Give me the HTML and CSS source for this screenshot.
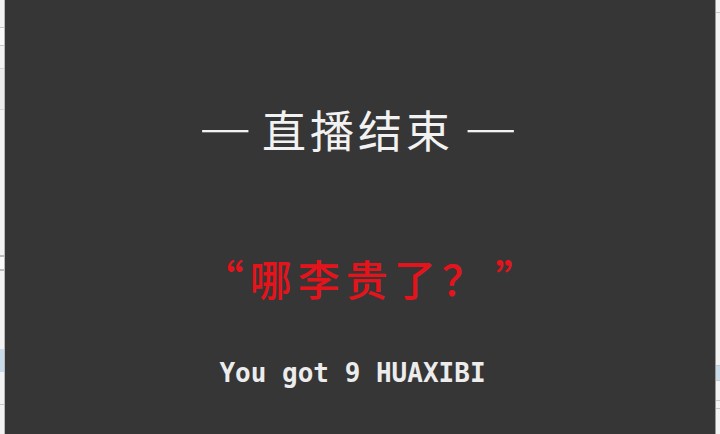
FILE: index.html
```html
<!DOCTYPE html>
<html lang="zh-CN">
<head>
<meta charset="utf-8">
<title>直播结束</title>
<link rel="stylesheet" href="styles.css">
</head>
<body>
<div class="frame">
  <div class="strip strip-left">
    <div class="sp" style="height:27px"></div>
    <div class="ln"></div>
    <div class="band-light" style="height:17px"></div>
    <div class="ln"></div>
    <div class="sp" style="height:22px"></div>
    <div class="box" style="height:40px"></div>
    <div class="sp" style="height:145px"></div>
    <div class="ln thick"></div>
    <div class="band-light" style="height:12px"></div>
    <div class="ln thick"></div>
    <div class="sp" style="height:78px"></div>
    <div class="ln teal"></div>
    <div class="band-blue" style="height:22px"></div>
    <div class="sp" style="height:32px"></div>
    <div class="ln"></div>
  </div>
  <main class="panel">
    <h1 class="title"><span class="dash">—</span> 直播结束 <span class="dash">—</span></h1>
    <p class="quote">“哪李贵了？ ”</p>
    <p class="reward">You got 9 HUAXIBI</p>
  </main>
  <div class="strip strip-right">
    <div class="sp" style="height:12px"></div>
    <div class="ln"></div>
    <div class="sp" style="height:352px"></div>
    <div class="ln"></div>
    <div class="band-blue" style="height:14px"></div>
    <div class="ln"></div>
    <div class="sp" style="height:19px"></div>
    <div class="ln"></div>
    <div class="sp" style="height:7px"></div>
    <div class="ln"></div>
  </div>
</div>
</body>
</html>
```
FILE: styles.css
```css
html, body {
  margin: 0;
  padding: 0;
  width: 720px;
  height: 434px;
  overflow: hidden;
  background: #f1f1f1;
}

.frame {
  display: flex;
  width: 720px;
  height: 434px;
}

.strip {
  display: flex;
  flex-direction: column;
  background: #f3f3f3;
}

.strip-left {
  width: 4px;
  border-right: 1px solid #b9b9b9;
}

.strip-right {
  width: 4px;
  border-left: 1px solid #9a9a9a;
}

.sp { flex: none; }

.ln {
  flex: none;
  height: 1px;
  background: #c8c8c8;
}

.ln.thick {
  height: 2px;
  background: #bdbdbd;
}

.ln.teal { background: #c9e0de; }

.band-light {
  flex: none;
  background: #fafafa;
}

.band-blue {
  flex: none;
  background: #c7dbe8;
}

.box {
  flex: none;
  background: #ececec;
  border-top: 1px solid #d6d6d6;
  border-bottom: 1px solid #d6d6d6;
}

.panel {
  flex: 1;
  background: #363636;
  display: flex;
  flex-direction: column;
  align-items: center;
  padding-top: 107px;
  box-sizing: border-box;
}

.title {
  margin: 0;
  padding-right: 4px;
  font-family: "Noto Sans CJK SC", "Noto Sans", sans-serif;
  font-weight: 400;
  font-size: 44px;
  line-height: 44px;
  color: #f2f2f2;
  letter-spacing: 4px;
  word-spacing: -4px;
  white-space: pre;
}

.dash {
  font-size: 54px;
  line-height: 0;
  vertical-align: -4px;
  letter-spacing: 0;
}

.quote {
  margin: 105px 0 0;
  padding-left: 25px;
  font-family: "Noto Sans CJK SC", sans-serif;
  font-weight: 500;
  font-size: 42px;
  line-height: 44px;
  color: #e5141c;
  letter-spacing: 6px;
  word-spacing: -10px;
  white-space: pre;
}

.reward {
  margin: 60px 0 0;
  font-family: "DejaVu Sans Mono", "Liberation Mono", monospace;
  font-weight: bold;
  font-size: 26px;
  line-height: 26px;
  color: #ececec;
  white-space: pre;
  padding-right: 15px;
}
```
